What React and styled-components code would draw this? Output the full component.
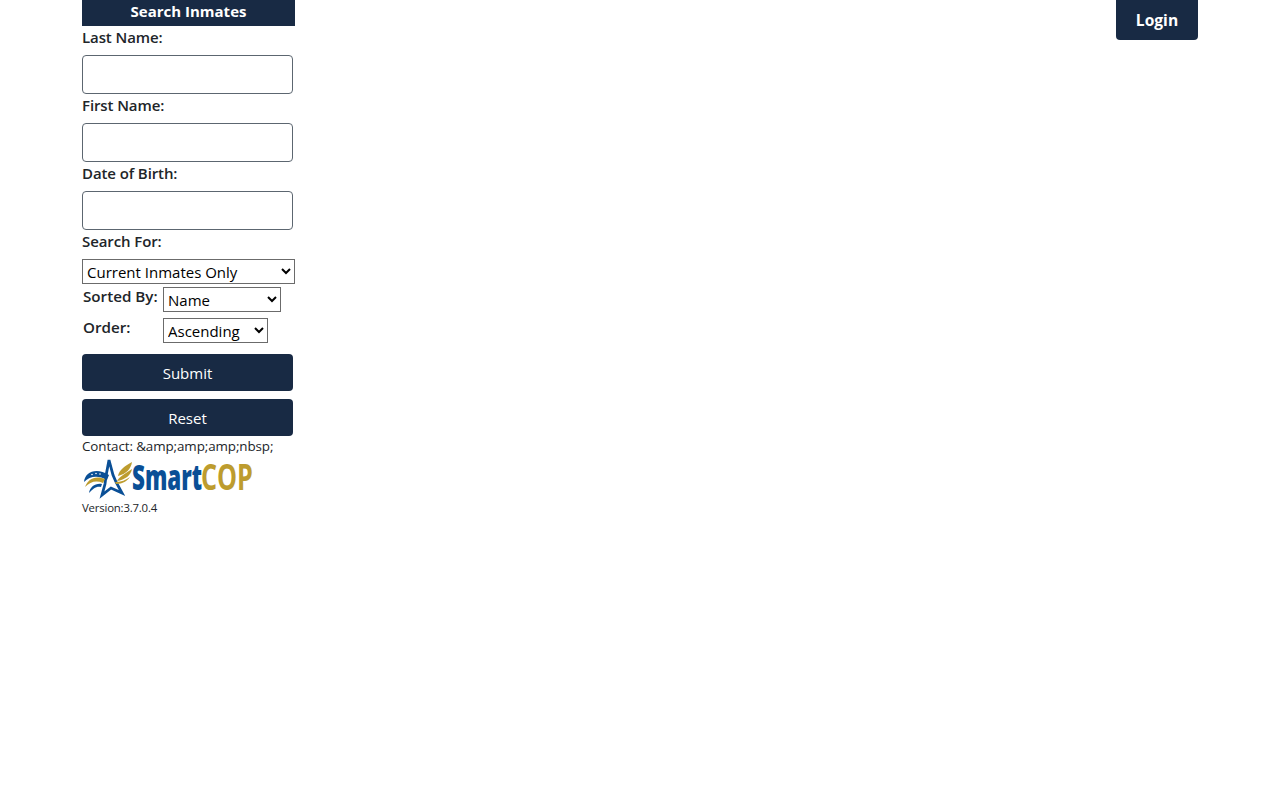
import React from 'react'
import styled, { createGlobalStyle } from 'styled-components'

const navy = '#182a44'

const GlobalStyle = createGlobalStyle`
  html, body {
    margin: 0;
    padding: 0;
    background: #fff;
    font-family: "Open Sans", "Noto Sans", "Liberation Sans", sans-serif;
    color: #212529;
  }
`

const Page = styled.div`
  display: flex;
  justify-content: space-between;
  align-items: flex-start;
  width: 1116px;
  height: 800px;
  margin-left: 82px;
`

const Sidebar = styled.form`
  display: flex;
  flex-direction: column;
  width: 213px;
`

const Title = styled.div`
  height: 26px;
  line-height: 23px;
  text-align: center;
  background: ${navy};
  color: #fff;
  font-size: 15px;
  font-weight: 700;
`

const Label = styled.label`
  display: block;
  height: 29px;
  line-height: 23px;
  font-size: 15px;
  font-weight: 600;
  letter-spacing: -0.1px;
`

const Input = styled.input`
  display: block;
  box-sizing: border-box;
  width: 211px;
  height: 39px;
  border: 1px solid #5c6670;
  border-radius: 4px;
  background: #fff;
  padding: 0 8px;
`

const Select = styled.select`
  display: block;
  box-sizing: border-box;
  width: ${(p) => p.$width}px;
  height: 25px;
  border: 1px solid #6b6b6b;
  border-radius: 0;
  background: #fff;
  color: #000;
  font-family: inherit;
  font-size: 15px;
  padding: 0;
`

const SortRow = styled.div`
  display: grid;
  grid-template-columns: 80px auto;
  justify-content: start;
  margin-top: ${(p) => p.$top}px;
  padding-left: 1px;
`

const SortLabel = styled.span`
  font-size: 15.2px;
  font-weight: 600;
  line-height: 18px;
`

const Button = styled.button`
  display: block;
  width: 211px;
  height: 37px;
  margin-top: ${(p) => p.$top}px;
  border: 0;
  border-radius: 4px;
  background: ${navy};
  color: #fff;
  font-family: inherit;
  font-size: 15px;
  line-height: 20px;
  padding: 1px 0 0;
`

const Contact = styled.div`
  margin-top: 1px;
  font-size: 13.4px;
  line-height: 18px;
  letter-spacing: -0.1px;
`

const Logo = styled.svg`
  display: block;
  width: 174px;
  height: 40px;
  margin-top: 2px;
  overflow: visible;
`

const Version = styled.div`
  margin-top: 2px;
  font-size: 11.4px;
  line-height: 18px;
  letter-spacing: -0.2px;
`

const LoginButton = styled.button`
  width: 82px;
  height: 40px;
  border: 0;
  border-radius: 0 0 4px 4px;
  background: ${navy};
  color: #fff;
  font-family: inherit;
  font-size: 15.6px;
  font-weight: 700;
  padding: 0;
`

const SmartCopLogo = () => (
  <Logo viewBox="0 0 174 40">
    {/* star */}
    <path
      d="M27 3 L31 18 L34 25 L40 36 L29 31 L20 38 L23 27 L24 19 Z"
      fill="#fff"
      stroke="#0a4f96"
      strokeWidth="2.8"
    />
    {/* eagle head */}
    <path d="M2 25 C3 15 14 10 27 18 L25 23 C16 18 8 19 2 25 Z" fill="#0a4f96" />
    <circle cx="10" cy="17.5" r="0.8" fill="#fff" />
    <circle cx="14" cy="16.5" r="0.8" fill="#fff" />
    <circle cx="18" cy="17" r="0.8" fill="#fff" />
    <path d="M3 30 C6 22 13 18 23 22 L21 26 C14 23 8 25 3 30 Z" fill="#bd9c2e" />
    <path d="M7 36 C8 30 13 26 20 27 L19 30 C14 29 11 32 7 36 Z" fill="#0a4f96" />
    {/* wing */}
    <path d="M50 5 C49 12 44 17 36 19 C37 13 43 9 50 5 Z" fill="#bd9c2e" />
    <path d="M50 12 C49 18 43 23 35 24 C37 20 44 16 50 12 Z" fill="#bd9c2e" />
    <path d="M48 20 C45 24 41 27 34 27 L33 25 C39 25 44 23 48 20 Z" fill="#bd9c2e" />
    <text transform="translate(50 33) scale(0.64 1)" fontFamily="'Open Sans', sans-serif" fontSize="35" fontWeight="800" fill="#0a4f96">Smart</text>
    <text transform="translate(119 33) scale(0.72 1)" fontFamily="'Open Sans', sans-serif" fontSize="35" fontWeight="700" fill="#bd9c2e">COP</text>
  </Logo>
)

export default function App() {
  return (
    <>
      <GlobalStyle />
      <Page>
        <Sidebar onSubmit={(e) => e.preventDefault()}>
          <Title>Search Inmates</Title>
          <Label>Last Name:</Label>
          <Input type="text" />
          <Label>First Name:</Label>
          <Input type="text" />
          <Label>Date of Birth:</Label>
          <Input type="text" />
          <Label>Search For:</Label>
          <Select $width={213} defaultValue="current">
            <option value="current">Current Inmates Only</option>
            <option value="all">All Inmates</option>
          </Select>
          <SortRow $top={3}>
            <SortLabel>Sorted By:</SortLabel>
            <Select $width={118} defaultValue="name">
              <option value="name">Name</option>
              <option value="date">Date</option>
            </Select>
          </SortRow>
          <SortRow $top={6}>
            <SortLabel>Order:</SortLabel>
            <Select $width={105} defaultValue="asc">
              <option value="asc">Ascending</option>
              <option value="desc">Descending</option>
            </Select>
          </SortRow>
          <Button $top={11}>Submit</Button>
          <Button $top={8} type="reset">Reset</Button>
          <Contact>Contact: &amp;amp;amp;amp;nbsp;</Contact>
          <SmartCopLogo />
          <Version>Version:3.7.0.4</Version>
        </Sidebar>
        <LoginButton>Login</LoginButton>
      </Page>
    </>
  )
}
